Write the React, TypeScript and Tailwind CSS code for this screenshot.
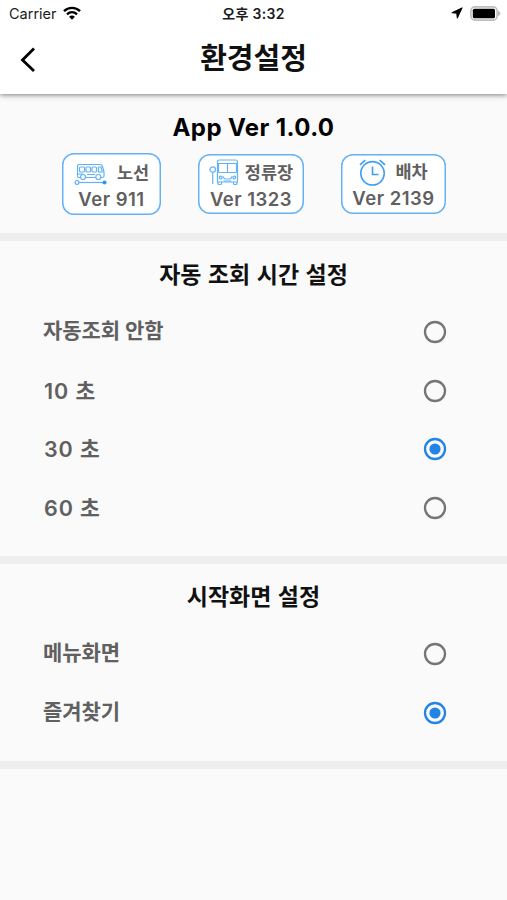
import React from "react";

const ui = "font-['Inter','Noto_Sans_CJK_KR',sans-serif]";

function StatusBar() {
  return (
    <div className="grid h-7 grid-cols-3 items-center text-[#1c1c1c]">
      <div className="flex items-center gap-[6px] pl-[9px]">
        <span className="text-[14.5px] leading-7">Carrier</span>
        <svg className="mb-0.5" width="18" height="14" viewBox="0 0 18 14" fill="none" stroke="#000" strokeWidth="2.4">
          <path d="M1 5.2C5.5 0.7 12.500 0.700 17 5.200" />
          <path d="M4 8.300C6.900 5.500 11.100 5.500 14 8.300" />
          <path d="M6.100 10.800C7.900 9.200 10.100 9.200 11.900 10.800L9 13.700Z" fill="#000" stroke="none" />
        </svg>
      </div>
      <div className="whitespace-nowrap text-center text-[14px] font-semibold leading-7 tracking-[0.3px]">오후 3:32</div>
      <div className="flex items-center justify-end gap-[7px] pb-[2px] pr-[6px]">
        <svg width="12" height="12" viewBox="0 0 12 12">
          <path d="M11.200 0.800L0.800 5.700L5.700 6.300L6.300 11.200Z" fill="#000" stroke="#000" strokeWidth="0.9" strokeLinejoin="round" />
        </svg>
        <svg width="31" height="15" viewBox="0 0 31 15">
          <rect x="0.900" y="0.900" width="26.200" height="13.200" rx="4" fill="#fff" stroke="#bdbdbd" strokeWidth="1.600" />
          <rect x="2.800" y="2.800" width="22.200" height="9.400" rx="1.500" fill="#000" />
          <path d="M28 4.500Q30.500 5.800 30.500 7.500Q30.500 9.200 28 10.500Z" fill="#bdbdbd" />
        </svg>
      </div>
    </div>
  );
}

function RouteIcon() {
  return (
    <svg width="33" height="23" viewBox="0 0 33 23" fill="none" stroke="#64b2f5" strokeWidth="1.200">
      <path d="M6 14.500H4.500Q3.500 14.500 3.500 13V3.500Q3.500 1.500 5.500 1.500H26Q28 1.500 28.700 4L30 9V13Q30 14.500 28.500 14.500H27M21.500 14.500H12" />
      <rect x="5.500" y="4" width="5" height="5" rx="1" />
      <rect x="12" y="4" width="4.500" height="5" rx="1" />
      <rect x="18" y="4" width="4.500" height="5" rx="1" />
      <path d="M24.500 4H27L28.300 9H24.500ZM4 11H9M13 11.500H21" />
      <circle cx="9" cy="14" r="2.500" />
      <circle cx="24.300" cy="14" r="2.500" />
      <circle cx="3" cy="19.500" r="1.900" />
      <path d="M5 19.500H29" />
      <circle cx="30.500" cy="19.500" r="2.100" fill="#2f98ef" stroke="none" />
    </svg>
  );
}

function StopIcon() {
  return (
    <svg width="30" height="27" viewBox="0 0 30 27" fill="none" stroke="#64b2f5" strokeWidth="1.200">
      <circle cx="3.700" cy="10.500" r="2.700" />
      <path d="M3.700 13.200V25" />
      <path d="M8.500 23V3Q8.500 1 10.500 1H26.500Q28.500 1 28.500 3V23Z" />
      <path d="M8.500 4.500H28.500M9.500 13.500H27.500M9.500 4.500V13.500M27.500 4.500V13.500M18.500 4.500V13.500" />
      <path d="M9 23V24.800Q9 25.500 10 25.500H11.500Q12.500 25.500 12.500 24.800V23M24.500 23V24.800Q24.500 25.500 25.500 25.500H27Q28 25.500 28 24.800V23" />
      <path d="M14 17.500Q15 20 16.500 20H20.500Q22 20 23 17.500M14.500 22H22.500" />
      <circle cx="11.700" cy="18.500" r="1.400" />
      <circle cx="25.300" cy="18.500" r="1.400" />
    </svg>
  );
}

function AlarmIcon() {
  return (
    <svg width="27" height="27" viewBox="0 0 27 27" fill="none" stroke="#3a9ff2" strokeWidth="1.600">
      <circle cx="13.500" cy="14.300" r="11.700" />
      <path d="M13.500 7.500V15.500H19.500" />
      <path d="M1 5.900L6.300 1.200M26 5.900L20.700 1.200" />
    </svg>
  );
}

interface VersionCardProps {
  icon: React.ReactNode;
  label: string;
  version: string;
  className: string;
}

function VersionCard({ icon, label, version, className }: VersionCardProps) {
  return (
    <div className={`flex flex-col items-center rounded-[12px] bg-white text-[#606060] shadow-[inset_0_0_0_1.5px_#64b2f5] ${className}`}>
      <div className="flex h-[29px] items-center">
        {icon}
        <span className="whitespace-nowrap text-[17.5px] font-bold leading-[29px]">{label}</span>
      </div>
      <span className="whitespace-nowrap text-[18.5px] font-semibold leading-6 tracking-[0.5px]">{version}</span>
    </div>
  );
}

function Radio({ checked }: { checked: boolean }) {
  const color = checked ? "#2484e4" : "#757575";
  return (
    <svg width="24" height="24" viewBox="0 0 24 24" fill="none">
      <circle cx="12" cy="12" r="10" stroke={color} strokeWidth="2.300" />
      {checked && <circle cx="12" cy="12" r="5.600" fill={color} />}
    </svg>
  );
}

interface SettingProps {
  title: string;
  options: string[];
  selected: number;
  className: string;
}

function Setting({ title, options, selected, className }: SettingProps) {
  return (
    <section className={`border-b-8 border-[#eeeeee] ${className}`}>
      <h2 className="h-[47px] text-center text-[23px] font-bold leading-[38px] text-[#111] [word-spacing:1px]">{title}</h2>
      {options.map((option, i) => (
        <div key={option} className="flex h-[58.6px] items-center justify-between pl-[43px] pr-[60px]">
          <span
            className={`font-semibold text-[#606060] ${
              /^\d/.test(option) ? "pl-px text-[21.5px] tracking-[0.9px]" : "pb-[3px] text-[21px] tracking-[-0.1px]"
            }`}
          >
            {option}
          </span>
          <Radio checked={i === selected} />
        </div>
      ))}
    </section>
  );
}

export default function App() {
  return (
    <div className={`flex h-[900px] w-[507px] flex-col overflow-hidden bg-[#fafafa] ${ui}`}>
      <header className="relative z-10 h-[94px] bg-white shadow-[0_1px_5px_rgba(0,0,0,0.5)]">
        <StatusBar />
        <div className="grid h-[62px] grid-cols-[60px_1fr_60px] items-center">
          <svg className="ml-5" width="16" height="26" viewBox="0 0 16 26" fill="none" stroke="#000" strokeWidth="2.800">
            <path d="M14 2.500L2.500 14L14 25" />
          </svg>
          <h1 className="text-center text-[29px] font-bold leading-[62px] text-[#111]">환경설정</h1>
        </div>
      </header>
      <section className="h-[147px] border-b-8 border-[#eeeeee] pt-[18px]">
        <h2 className="text-center text-[24px] font-bold leading-8 tracking-[0.4px] text-black">App Ver 1.0.0</h2>
        <div className="mt-[9px] flex items-start pl-[62px]">
          <VersionCard
            className="h-[62px] w-[99px] pt-[5px]"
            icon={<span className="mr-[10px] mt-[3px]"><RouteIcon /></span>}
            label="노선"
            version="Ver 911"
          />
          <VersionCard
            className="ml-[37px] mt-px h-[60px] w-[106px] pt-1"
            icon={<span className="mr-[6px]"><StopIcon /></span>}
            label="정류장"
            version="Ver 1323"
          />
          <VersionCard
            className="ml-[37px] mt-px h-[60px] w-[105px] pt-[3px]"
            icon={<span className="mr-[9px] mt-px"><AlarmIcon /></span>}
            label="배차"
            version="Ver 2139"
          />
        </div>
      </section>
      <Setting className="h-[323px] pt-[15px]" title="자동 조회 시간 설정" options={["자동조회 안함", "10 초", "30 초", "60 초"]} selected={2} />
      <Setting className="h-[205px] pt-[14px]" title="시작화면 설정" options={["메뉴화면", "즐겨찾기"]} selected={1} />
    </div>
  );
}
